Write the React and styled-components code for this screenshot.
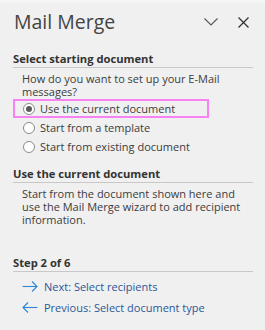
import React from "react";
import styled, { createGlobalStyle } from "styled-components";

const Global = createGlobalStyle`
  html, body { margin: 0; padding: 0; background: #f0f0f0; }
  body { font-family: "Open Sans", "Noto Sans", sans-serif; }
`;

const Pane = styled.div`
  width: 265px;
  height: 330px;
  box-sizing: border-box;
  padding: 0 12px 0 13px;
  background: linear-gradient(#f8f8f8 0, #f0f0f0 4px, #f0f0f0 100%);
`;

const Header = styled.header`
  display: flex;
  align-items: center;
  height: 44px;
`;

const Title = styled.h1`
  flex: 1;
  margin: 0 0 0 1px;
  font-size: 19.5px;
  font-weight: 400;
  color: #444;
  line-height: 24px;
`;

const IconButton = styled.button`
  border: 0;
  background: none;
  padding: 0;
  display: flex;
  align-items: center;
  justify-content: center;
  width: ${(p) => p.$w}px;
  margin-right: ${(p) => p.$mr}px;
  color: #555;
`;

const Heading = styled.h2`
  margin: ${(p) => p.$mt}px 0 0;
  font-size: 11.2px;
  font-weight: 700;
  line-height: 16px;
  color: #333;
  border-bottom: 1px solid #c8c8c8;
`;

const Text = styled.p`
  margin: 4px 0 0 9px;
  font-size: 11px;
  line-height: 13px;
  color: #3c3c3c;
`;

const Options = styled.div`
  display: flex;
  flex-direction: column;
  margin-top: 1px;
`;

const Option = styled.label`
  display: flex;
  align-items: center;
  gap: 5px;
  box-sizing: border-box;
  height: 19px;
  width: 196px;
  padding-left: 8px;
  border: 2px solid ${(p) => (p.$focused ? "#f682f3" : "transparent")};
  font-size: 11px;
  color: #3c3c3c;
`;

const Radio = styled.span`
  width: 12px;
  height: 12px;
  box-sizing: border-box;
  border-radius: 50%;
  border: 1px solid #8a8a8a;
  background: #fff;
  display: flex;
  align-items: center;
  justify-content: center;
  &::after {
    content: "";
    width: 6px;
    height: 6px;
    border-radius: 50%;
    background: ${(p) => (p.$checked ? "#5a5a5a" : "transparent")};
  }
`;

const Links = styled.div`
  display: flex;
  flex-direction: column;
  margin-top: 4px;
`;

const Link = styled.a`
  display: flex;
  align-items: center;
  gap: 6px;
  height: 21px;
  padding-left: 9px;
  font-size: 11px;
  color: #2b5797;
  text-decoration: none;
`;

const Arrow = ({ dir }) => (
  <svg width="16" height="11" viewBox="0 0 16 11" fill="none" stroke="#2f86d6" strokeWidth="1.1">
    {dir === "right" ? (
      <>
        <line x1="0.5" y1="5.5" x2="15" y2="5.5" />
        <polyline points="10,0.5 15,5.5 10,10.5" />
      </>
    ) : (
      <>
        <line x1="1" y1="5.5" x2="15.5" y2="5.5" />
        <polyline points="6,0.5 1,5.5 6,10.5" />
      </>
    )}
  </svg>
);

export default function App() {
  return (
    <>
      <Global />
      <Pane>
        <Header>
          <Title>Mail Merge</Title>
          <IconButton $w={14} $mr={20} aria-label="Options">
            <svg width="14" height="8" viewBox="0 0 14 8" fill="none" stroke="#555" strokeWidth="1.1">
              <polyline points="0.5,0.5 7,7 13.5,0.5" />
            </svg>
          </IconButton>
          <IconButton $w={11} $mr={4} aria-label="Close">
            <svg width="11" height="11" viewBox="0 0 11 11" fill="none" stroke="#333" strokeWidth="1.2">
              <line x1="0.5" y1="0.5" x2="10.5" y2="10.5" />
              <line x1="10.5" y1="0.5" x2="0.5" y2="10.5" />
            </svg>
          </IconButton>
        </Header>

        <Heading $mt={7}>Select starting document</Heading>
        <Text>How do you want to set up your E-Mail messages?</Text>
        <Options>
          <Option $focused>
            <Radio $checked />
            Use the current document
          </Option>
          <Option>
            <Radio />
            Start from a template
          </Option>
          <Option>
            <Radio />
            Start from existing document
          </Option>
        </Options>

        <Heading $mt={10}>Use the current document</Heading>
        <Text>
          Start from the document shown here and use the Mail Merge wizard to add recipient
          information.
        </Text>

        <Heading $mt={29}>Step 2 of 6</Heading>
        <Links>
          <Link href="#">
            <Arrow dir="right" />
            Next: Select recipients
          </Link>
          <Link href="#">
            <Arrow dir="left" />
            Previous: Select document type
          </Link>
        </Links>
      </Pane>
    </>
  );
}
